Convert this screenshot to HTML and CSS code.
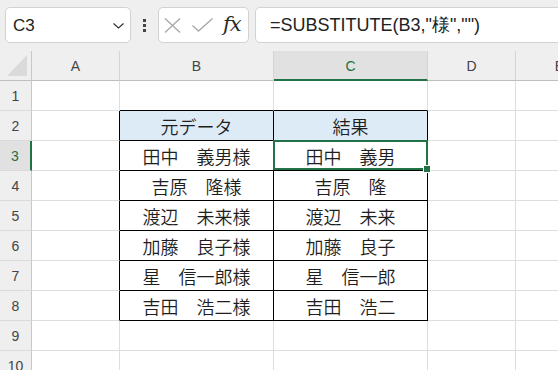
FILE: index.html
```html
<!DOCTYPE html>
<html lang="ja">
<head>
<meta charset="utf-8">
<link rel="stylesheet" href="styles.css">
</head>
<body>
<div class="toolbar">
  <div class="namebox">
    <span class="ref">C3</span>
    <svg class="chev" width="11" height="6" viewBox="0 0 11 6"><polyline points="0.5,0.5 5.5,5 10.5,0.5" fill="none" stroke="#333" stroke-width="1.2"/></svg>
  </div>
  <div class="kebab"><span></span><span></span><span></span></div>
  <div class="fnbox">
    <svg class="ic-x" width="17" height="15" viewBox="0 0 17 15"><path d="M1 0.5 L16 14.5 M16 0.5 L1 14.5" stroke="#a8a8a8" stroke-width="1.3" fill="none"/></svg>
    <svg class="ic-ok" width="21" height="14" viewBox="0 0 21 14"><polyline points="0.5,7.5 6.5,13 20.5,0.5" fill="none" stroke="#a8a8a8" stroke-width="1.3"/></svg>
    <span class="fx">fx</span>
  </div>
  <div class="formula">=SUBSTITUTE(B3,"様","")</div>
</div>
<div class="sheet">
  <div class="cell corner"><svg width="20" height="21" viewBox="0 0 20 21"><polygon points="20,0 20,21 0,21" fill="#dadada"/></svg></div>
  <div class="cell ch">A</div>
  <div class="cell ch">B</div>
  <div class="cell ch active">C</div>
  <div class="cell ch">D</div>
  <div class="cell ch">E</div>

  <div class="cell rh">1</div>
  <div class="cell"></div>
  <div class="cell tt"></div>
  <div class="cell tt"></div>
  <div class="cell"></div>
  <div class="cell"></div>

  <div class="cell rh">2</div>
  <div class="cell tl"></div>
  <div class="cell tb th">元データ</div>
  <div class="cell tb th">結果</div>
  <div class="cell"></div>
  <div class="cell"></div>

  <div class="cell rh active">3</div>
  <div class="cell tl"></div>
  <div class="cell tb">田中　義男様</div>
  <div class="cell tb sel">田中　義男<span class="selbox"></span><span class="handle"></span></div>
  <div class="cell"></div>
  <div class="cell"></div>

  <div class="cell rh">4</div>
  <div class="cell tl"></div>
  <div class="cell tb">吉原　隆様</div>
  <div class="cell tb">吉原　隆</div>
  <div class="cell"></div>
  <div class="cell"></div>

  <div class="cell rh">5</div>
  <div class="cell tl"></div>
  <div class="cell tb">渡辺　未来様</div>
  <div class="cell tb">渡辺　未来</div>
  <div class="cell"></div>
  <div class="cell"></div>

  <div class="cell rh">6</div>
  <div class="cell tl"></div>
  <div class="cell tb">加藤　良子様</div>
  <div class="cell tb">加藤　良子</div>
  <div class="cell"></div>
  <div class="cell"></div>

  <div class="cell rh">7</div>
  <div class="cell tl"></div>
  <div class="cell tb">星　信一郎様</div>
  <div class="cell tb">星　信一郎</div>
  <div class="cell"></div>
  <div class="cell"></div>

  <div class="cell rh">8</div>
  <div class="cell tl"></div>
  <div class="cell tb">吉田　浩二様</div>
  <div class="cell tb">吉田　浩二</div>
  <div class="cell"></div>
  <div class="cell"></div>

  <div class="cell rh">9</div>
  <div class="cell"></div>
  <div class="cell"></div>
  <div class="cell"></div>
  <div class="cell"></div>
  <div class="cell"></div>

  <div class="cell rh">10</div>
  <div class="cell"></div>
  <div class="cell"></div>
  <div class="cell"></div>
  <div class="cell"></div>
  <div class="cell"></div>
</div>
</body>
</html>
```
FILE: styles.css
```css
html, body {
  margin: 0;
  padding: 0;
  width: 558px;
  height: 370px;
  overflow: hidden;
  background: #ffffff;
}

.toolbar {
  height: 51px;
  box-sizing: border-box;
  background: #efefef;
  display: flex;
  align-items: flex-start;
  padding: 7px 0 0 5px;
  font-family: "Liberation Sans", Arial, sans-serif;
}

.toolbar > * { flex-shrink: 0; }

.namebox {
  width: 126px;
  height: 36px;
  box-sizing: border-box;
  background: #fff;
  border: 1px solid #d2d2d2;
  border-radius: 5px;
  display: flex;
  align-items: center;
  justify-content: space-between;
  padding: 0 6px 0 7px;
}

.ref {
  font-size: 17px;
  color: #222;
  padding-top: 1px;
}

.chev { margin-top: 1px; }

.kebab {
  width: 27px;
  height: 36px;
  display: flex;
  flex-direction: column;
  align-items: center;
  justify-content: center;
  gap: 2px;
}

.kebab span {
  width: 3px;
  height: 3px;
  background: #444;
}

.fnbox {
  width: 91px;
  height: 36px;
  box-sizing: border-box;
  background: #fff;
  border: 1px solid #d2d2d2;
  border-radius: 5px;
  display: flex;
  align-items: center;
  padding-left: 5px;
}

.ic-x { margin-right: 11px; }
.ic-ok { margin-right: 10px; }

.fx {
  font-family: "DejaVu Serif", "Liberation Serif", serif;
  font-style: italic;
  font-size: 21px;
  color: #2a2a2a;
  letter-spacing: -1px;
  padding-bottom: 2px;
}

.formula {
  margin-left: 6px;
  width: 400px;
  height: 36px;
  box-sizing: border-box;
  background: #fff;
  border: 1px solid #d2d2d2;
  border-radius: 5px;
  display: flex;
  align-items: center;
  padding-left: 14px;
  font-size: 18px;
  color: #222;
}

.sheet {
  display: grid;
  grid-template-columns: 32px 88px 154px 154px 88px 88px;
  grid-auto-rows: 30px;
  width: 604px;
}

.cell {
  box-sizing: border-box;
  border-right: 1px solid #dedede;
  border-bottom: 1px solid #dedede;
  display: flex;
  align-items: center;
  justify-content: center;
  font-family: "Noto Sans CJK JP", sans-serif;
  font-weight: 350;
  font-size: 18px;
  color: #1e1e1e;
  white-space: nowrap;
}

.corner {
  background: #efefef;
  border-right-color: #c8c8c8;
  border-bottom-color: #c0c0c0;
  justify-content: flex-end;
  align-items: flex-end;
  padding: 0 4px 4px 0;
}

.ch {
  background: #efefef;
  border-right-color: #d4d4d4;
  border-bottom-color: #bdbdbd;
  font-family: "Liberation Sans", Arial, sans-serif;
  font-weight: 400;
  font-size: 14px;
  color: #444;
  padding-top: 1px;
}

.ch.active {
  background: #e1e1e1;
  color: #1e6e42;
  border-bottom: 2px solid #217346;
  padding-top: 2px;
}

.rh {
  background: #efefef;
  border-right-color: #c8c8c8;
  border-bottom-color: #dadada;
  font-family: "Liberation Sans", Arial, sans-serif;
  font-weight: 400;
  font-size: 14px;
  color: #444;
}

.rh.active {
  background: #e1e1e1;
  color: #1e6e42;
  border-right: 2px solid #217346;
}

.tl { border-right-color: #000; }
.tt { border-bottom-color: #000; }
.tb {
  border-right-color: #000;
  border-bottom-color: #000;
}
.th { background: #ddebf7; }

.sel { position: relative; }

.selbox {
  position: absolute;
  left: -1px;
  top: -1px;
  right: -1px;
  bottom: 0;
  border: 2px solid #217346;
}

.handle {
  position: absolute;
  right: -4px;
  bottom: -3px;
  width: 6px;
  height: 6px;
  background: #217346;
  border: 1px solid #fff;
}
```
